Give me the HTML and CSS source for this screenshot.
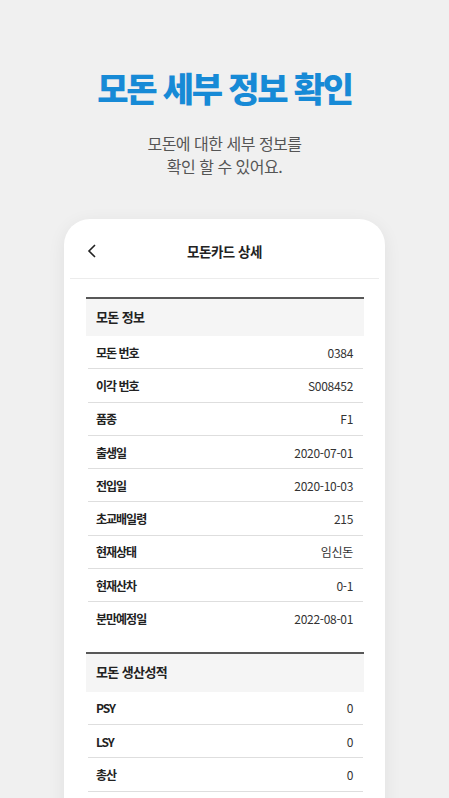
FILE: index.html
```html
<!DOCTYPE html>
<html lang="ko">
<head>
  <meta charset="UTF-8" />
  <title>모돈 세부 정보 확인</title>
  <meta name="viewport" content="width=device-width, initial-scale=1.0" />
  <link rel="stylesheet" href="styles.css">
</head>
<body>

<div class="hero">
  <h1>모돈 세부 정보 확인</h1>
  <p>모돈에 대한 세부 정보를<br>확인 할 수 있어요.</p>
</div>

<div class="card">
  <div class="card-header">
    <span class="back">
      <svg width="10" height="14" viewBox="0 0 10 14"><polyline points="8,1 2,7 8,13" fill="none" stroke="#222" stroke-width="1.6"/></svg>
    </span>
    <h2>모돈카드 상세</h2>
    <span></span>
  </div>

  <div class="card-body">
    <div class="section">
      <div class="section-title">모돈 정보</div>
      <div class="row"><span class="label">모돈 번호</span><span class="value">0384</span></div>
      <div class="row"><span class="label">이각 번호</span><span class="value">S008452</span></div>
      <div class="row"><span class="label">품종</span><span class="value">F1</span></div>
      <div class="row"><span class="label">출생일</span><span class="value">2020-07-01</span></div>
      <div class="row"><span class="label">전입일</span><span class="value">2020-10-03</span></div>
      <div class="row"><span class="label">초교배일령</span><span class="value">215</span></div>
      <div class="row"><span class="label">현재상태</span><span class="value">임신돈</span></div>
      <div class="row"><span class="label">현재산차</span><span class="value">0-1</span></div>
      <div class="row last"><span class="label">분만예정일</span><span class="value">2022-08-01</span></div>
    </div>

    <div class="section">
      <div class="section-title">모돈 생산성적</div>
      <div class="row"><span class="label">PSY</span><span class="value">0</span></div>
      <div class="row"><span class="label">LSY</span><span class="value">0</span></div>
      <div class="row"><span class="label">총산</span><span class="value">0</span></div>
    </div>
  </div>
</div>

</body>
</html>
```

FILE: styles.css
```css
body {
  font-family: "Noto Sans CJK KR", "Noto Sans", sans-serif;
  background-color: #f0f0f0;
  margin: 0;
  padding: 0;
  height: 798px;
  overflow: hidden;
}

.hero {
  text-align: center;
  padding-top: 68px;
}

.hero h1 {
  margin: 0;
  font-size: 34px;
  line-height: 40px;
  font-weight: 800;
  letter-spacing: -2.2px;
  color: #178ad6;
}

.hero p {
  margin: 24px 0 0;
  font-size: 16px;
  line-height: 23px;
  letter-spacing: -0.5px;
  color: #555;
}

.card {
  margin: 41px 64px 0;
  background: #fff;
  border-radius: 26px;
  box-shadow: 0 4px 18px rgba(0,0,0,0.07);
  padding-bottom: 40px;
}

.card-header {
  height: 60px;
  margin: 0 6px;
  padding-top: 4px;
  box-sizing: border-box;
  border-bottom: 1px solid #ececec;
  display: grid;
  grid-template-columns: 40px 1fr 40px;
  align-items: center;
}

.back {
  padding-left: 17px;
  display: flex;
}

.card-header h2 {
  margin: 0;
  text-align: center;
  font-size: 13.5px;
  font-weight: 700;
  letter-spacing: -0.5px;
  color: #222;
}

.card-body {
  padding: 18px 21px 0 22px;
}

.section {
  border-top: 2px solid #585858;
  margin-bottom: 17px;
}

.section-title {
  background: #f5f5f5;
  height: 37px;
  display: flex;
  align-items: center;
  padding: 0 10px 2px;
  box-sizing: border-box;
  font-size: 13px;
  font-weight: 700;
  letter-spacing: -0.6px;
  color: #222;
}

.section + .section .section-title {
  height: 38px;
}

.row {
  height: 32.3px;
  margin: 0 1px 0 2px;
  padding: 0 10px 0 8px;
  border-bottom: 1px solid #dedede;
  display: flex;
  align-items: center;
  justify-content: space-between;
  font-size: 12px;
}

.row.last {
  border-bottom: none;
}

.label {
  font-weight: 700;
  letter-spacing: -1px;
  color: #222;
}

.value {
  color: #333;
  letter-spacing: -0.3px;
}
```
